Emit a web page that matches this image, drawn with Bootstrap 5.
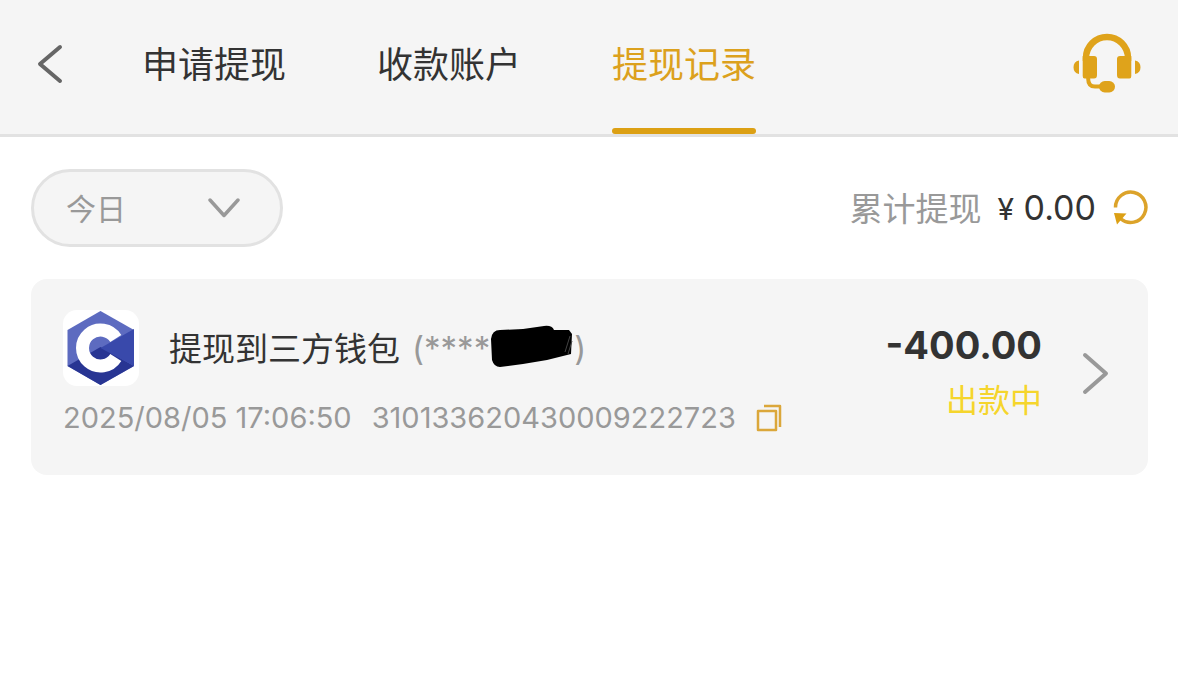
<!DOCTYPE html>
<html lang="zh-CN">
<head>
<meta charset="utf-8">
<meta name="viewport" content="width=device-width, initial-scale=1">
<title>提现记录</title>
<link href="https://cdn.jsdelivr.net/npm/bootstrap@5.3.0/dist/css/bootstrap.min.css" rel="stylesheet">
<style>
  body { font-family: Inter, "Noto Sans CJK SC", sans-serif; color: #333; background: #fff; }
  .topbar { background: #f5f5f5; border-bottom: 3px solid #e2e2e2; padding: 0 36px; }
  .tabs-row { gap: 91px; margin-left: 78px; }
  .tab-link { position: relative; display: block; padding: 38px 0 42px; font-size: 36px; line-height: 54px; color: #333; text-decoration: none; white-space: nowrap; }
  .tab-link.active { color: #dca11d; }
  .tab-link.active::after { content: ""; position: absolute; left: 0; right: 0; bottom: 0; height: 6px; border-radius: 3px; background: #dca014; }
  .icon-btn { border: 0; padding: 0; background: none; line-height: 0; }
  .icon-btn svg { display: block; }
  .back { margin-bottom: 6px; }
  .page { padding: 32px 30px 32px 31px; }
  .period { width: 252px; height: 78px; padding: 2px 32px 0; border: 3px solid #e2e2e2; border-radius: 39px; font-size: 30px; color: #999; appearance: none;
    background: #f5f5f5 url("data:image/svg+xml,%3Csvg xmlns='http://www.w3.org/2000/svg' width='32' height='20' fill='none' stroke='%23999' stroke-width='3.5' stroke-linecap='round' stroke-linejoin='round'%3E%3Cpath d='M2 2L16 17.500L30 2'/%3E%3C/svg%3E") no-repeat right 40px center; }
  .sum-row { gap: 16px; }
  .sum-label { font-size: 33px; line-height: 48px; color: #999; padding-top: 2px; }
  .sum-value { font-size: 34px; line-height: 48px; }
  .yen { font-size: 30px; }
  .record { margin-top: 32px; padding: 31px 38px 37px 32px; border-radius: 16px; background: #f5f5f5; }
  .logo { width: 76px; height: 76px; }
  .title { font-size: 33px; line-height: 48px; margin-left: 30px; padding-top: 2px; }
  .masked { font-size: 33px; line-height: 48px; color: #999; margin-left: 12px; }
  .meta { font-size: 29px; line-height: 40px; color: #999; gap: 20px; margin-top: 12px; }
  .amount { font-size: 38px; line-height: 48px; font-weight: 700; }
  .state { font-size: 32px; line-height: 48px; color: #f5d52c; margin-top: 8px; }
  .totals { padding-bottom: 2px; }
</style>
</head>
<body>
<header class="topbar d-flex align-items-center">
  <button class="icon-btn back" type="button" aria-label="返回">
    <svg width="28" height="40" viewBox="0 0 28 40" fill="none" stroke="#666" stroke-width="4" stroke-linecap="round" stroke-linejoin="round"><path d="M24 3L4 20L24 37"/></svg>
  </button>
  <nav class="tabs-row d-flex me-auto">
    <a class="tab-link" href="#">申请提现</a>
    <a class="tab-link" href="#">收款账户</a>
    <a class="tab-link active" href="#" aria-current="page">提现记录</a>
  </nav>
  <button class="icon-btn" type="button" aria-label="客服">
    <svg width="70" height="68" viewBox="0 0 70 68" fill="#dfa31b">
      <path d="M14 28V25a21 21 0 0 1 42 0V28" fill="none" stroke="#dfa31b" stroke-width="6.500"/>
      <path d="M10.700 23H22Q25 23 25 26V42Q25 45.500 22 45.500H12.500Q10.700 45.500 10.700 43ZM59.300 23H48Q45 23 45 26V42Q45 45.500 48 45.500H57.500Q59.300 45.500 59.300 43Z"/>
      <path d="M7 27.500V41Q1.500 40 1.500 34.250T7 27.500ZM63 27.500V41Q68.500 40 68.500 34.250T63 27.500Z"/>
      <path d="M16.200 44V46Q16.200 53.500 23 53.500H30" fill="none" stroke="#dfa31b" stroke-width="4"/>
      <rect x="27" y="48" width="16" height="11.500" rx="5.750"/>
    </svg>
  </button>
</header>

<main class="page">
  <div class="d-flex align-items-center justify-content-between">
    <select class="period" aria-label="时间范围"><option selected>今日</option><option>昨日</option></select>
    <div class="sum-row d-flex align-items-center">
      <span class="sum-label">累计提现</span>
      <span class="sum-value"><span class="yen">¥</span> 0.00</span>
      <button class="icon-btn" type="button" aria-label="刷新">
        <svg width="36" height="36" viewBox="0 0 36 36"><path d="M3.500 17.500A15.200 15.200 0 1 1 9 29" fill="none" stroke="#dca32a" stroke-width="3.500"/><path d="M2 23L14.500 23.500L5 34.500Z" fill="#dca014"/></svg>
      </button>
    </div>
  </div>

  <article class="record d-flex align-items-center">
    <div class="flex-grow-1">
      <div class="d-flex align-items-center">
        <svg class="logo" viewBox="0 0 76 76" role="img" aria-label="钱包">
          <rect width="76" height="76" rx="14" fill="#fff"/>
          <path d="M37.500 1L71 20V56L37.500 75L4.500 56V20Z" fill="#5d6bc0"/>
          <path d="M4.500 56L37.500 37L71 56L37.500 75Z" fill="#283593"/>
          <path d="M71 19V56L37.500 38Z" fill="#3949ab"/>
          <path d="M52.800 28.500A18 18 0 1 0 52.800 47.500" fill="none" stroke="#fff" stroke-width="13"/>
        </svg>
        <span class="title">提现到三方钱包</span>
        <span class="masked d-flex align-items-center"><span>(****</span><svg width="84" height="46" viewBox="0 0 84 46" aria-hidden="true"><path d="M1 14Q2 5 10 5L33 4L54 1Q62 0 64 5L79 5L82 9L81 29L57 35L33 39L10 42Q4 42 2 35Z" fill="#000"/><path d="M80 11L75 27M82 16L78 29" stroke="#444" stroke-width="1"/></svg><span>)</span></span>
      </div>
      <div class="meta d-flex align-items-center">
        <span>2025/08/05 17:06:50</span>
        <span>310133620430009222723</span>
        <button class="icon-btn" type="button" aria-label="复制">
          <svg width="26" height="28" viewBox="0 0 26 28" fill="none" stroke="#dba73a" stroke-width="2.500" stroke-linejoin="round"><rect x="2" y="7" width="18" height="19"/><path d="M8 2H24V23"/></svg>
        </button>
      </div>
    </div>
    <div class="totals text-end">
      <div class="amount">-400.00</div>
      <div class="state">出款中</div>
    </div>
    <svg class="ms-4" width="44" height="44" viewBox="0 0 44 44" fill="none" stroke="#999" stroke-width="4" stroke-linecap="round" stroke-linejoin="round" aria-hidden="true"><path d="M19 3L40 21.500L19 40"/></svg>
  </article>
</main>
<script src="https://cdn.jsdelivr.net/npm/bootstrap@5.3.0/dist/js/bootstrap.bundle.min.js"></script>
</body>
</html>
